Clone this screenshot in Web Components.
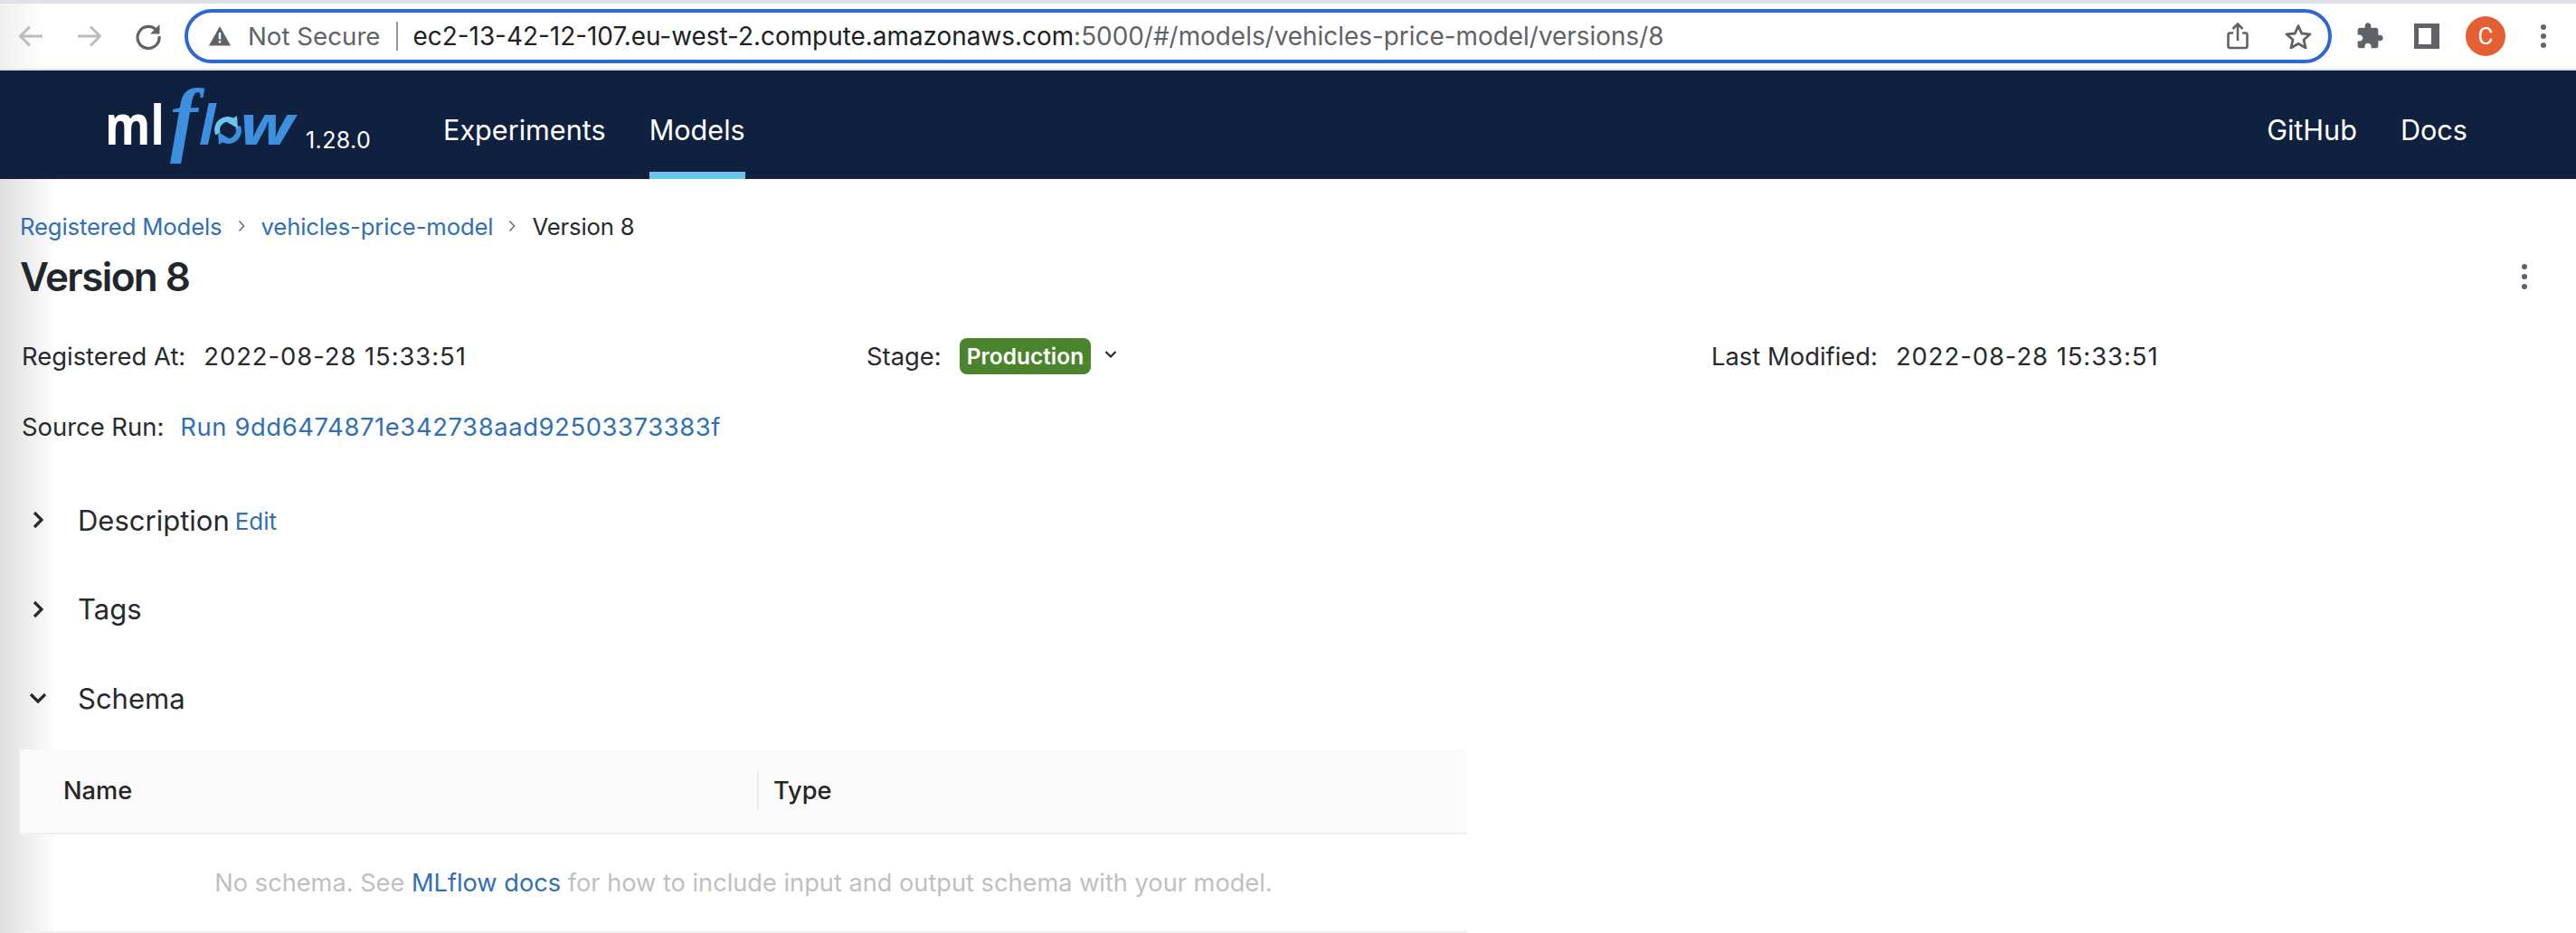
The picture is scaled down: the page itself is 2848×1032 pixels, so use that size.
<!DOCTYPE html>
<html>
<head>
<meta charset="utf-8">
<title>MLflow</title>
<style>
    html, body { margin: 0; padding: 0; background: #fff; }
    body { width: 2848px; height: 1032px; overflow: hidden; font-family: Inter, "Liberation Sans", sans-serif; color: #262a2e; }
</style>
</head>
<body>
<browser-bar url="ec2-13-42-12-107.eu-west-2.compute.amazonaws.com:5000/#/models/vehicles-price-model/versions/8"></browser-bar>
<ml-navbar version="1.28.0"></ml-navbar>
<version-page>
    <bread-crumbs></bread-crumbs>
    <page-title>Version 8</page-title>
    <meta-grid></meta-grid>
    <collapse-section label="Description" edit></collapse-section>
    <collapse-section label="Tags"></collapse-section>
    <collapse-section label="Schema" open></collapse-section>
    <schema-table></schema-table>
</version-page>

<script>
class BrowserBar extends HTMLElement {
    constructor() {
        super();
        this.attachShadow({ mode: 'open' });
    }

    connectedCallback() {
        const url = this.getAttribute('url');
        this.shadowRoot.innerHTML = `
            <style>
                :host { display: block; height: 78px; box-sizing: border-box; border-top: 4px solid #dee1e6; border-bottom: 2px solid #dee1e6; background: linear-gradient(90deg, #efefef, #fff 50px); }
                .bar { display: flex; align-items: center; height: 72px; padding-left: 20px; }
                svg { display: block; flex: none; }
                .pill { flex: none; width: 2374px; height: 60px; box-sizing: border-box; margin-left: 25px; border: 4px solid #3066d0; border-radius: 30px; display: flex; align-items: center; padding-left: 23px; background: #fff; font-family: Inter, "Liberation Sans", sans-serif; }
                .warn { font-size: 27.7px; color: #5f6368; margin-left: 19px; white-space: nowrap; }
                .sep { width: 2px; height: 32px; background: #9a9a9a; margin: 0 17px 0 17px; }
                .url { font-size: 27.9px; color: #202124; white-space: nowrap; flex: 1; }
                .url span { color: #5f6368; }
                .avatar { width: 44px; height: 44px; border-radius: 50%; background: #e36033; color: #fff; font: 26px Roboto, sans-serif; display: flex; align-items: center; justify-content: center; margin-left: 29px; flex: none; }
            </style>
            <div class="bar">
                <svg width="28" height="28" viewBox="0 0 28 28" fill="none" stroke="#bcbcbc" stroke-width="3"><path d="M27 14H3M13 3.5 2.5 14 13 24.5"/></svg>
                <svg style="margin-left:37px" width="28" height="28" viewBox="0 0 28 28" fill="none" stroke="#bcbcbc" stroke-width="3"><path d="M1 14h24M15 3.5 25.500 14 15 24.500"/></svg>
                <svg style="margin-left:36px" width="30" height="30" viewBox="0 0 30 30" fill="none"><path d="M24.500 9A12 12 0 1 0 27 15" stroke="#5f6368" stroke-width="3.200"/><path d="M27.500 2v10.500H17z" fill="#5f6368"/></svg>
                <div class="pill">
                    <svg width="24" height="22" viewBox="0 0 24 22"><path d="M12 0 24 21.500H0z" fill="#5f6368"/><path d="M10.800 7h2.400v7.500h-2.400zM10.800 16h2.400v2.500h-2.400z" fill="#fff"/></svg>
                    <div class="warn">Not Secure</div>
                    <div class="sep"></div>
                    <div class="url">${url.slice(0, 48)}<span>${url.slice(48)}</span></div>
                    <svg width="24" height="30" viewBox="0 0 24 30" fill="none" stroke="#5f6368" stroke-width="2.600" style="margin-right:40px"><path d="M7 11.500H3.500a2 2 0 0 0-2 2V26a2 2 0 0 0 2 2h17a2 2 0 0 0 2-2V13.500a2 2 0 0 0-2-2H17M12 20V2M6.500 7 12 1.500 17.500 7"/></svg>
                    <svg width="30" height="28" viewBox="0 0 30 28" fill="none" stroke="#5f6368" stroke-width="2.800" stroke-linejoin="round" style="margin-right:18px"><path d="M15 2.500 18.700 11 28 11.800 21 18 23.100 27 15 22.200 6.900 27 9 18 2 11.800 11.300 11z"/></svg>
                </div>
                <svg style="margin-left:26px" width="32" height="32" viewBox="0 0 24 24" fill="#5f6368"><path d="M20.500 11H19V7c0-1.100-.9-2-2-2h-4V3.500C13 2.120 11.880 1 10.500 1S8 2.120 8 3.500V5H4c-1.100 0-1.990.9-1.990 2v3.800H3.500c1.490 0 2.700 1.210 2.700 2.700s-1.210 2.700-2.700 2.700H2V20c0 1.100.9 2 2 2h3.800v-1.500c0-1.490 1.210-2.700 2.700-2.700 1.490 0 2.700 1.210 2.700 2.700V22H17c1.100 0 2-.9 2-2v-4h1.500c1.380 0 2.500-1.120 2.500-2.500S21.880 11 20.500 11z"/></svg>
                <svg style="margin-left:33px" width="28" height="28" viewBox="0 0 28 28"><path d="M0 0h28v28H0z" fill="#5f6368"/><path d="M5 5h14v18H5z" fill="#fff"/></svg>
                <div class="avatar">C</div>
                <svg style="margin-left:38px" width="8" height="28" viewBox="0 0 8 28" fill="#5f6368"><circle cx="4" cy="4" r="3"/><circle cx="4" cy="14" r="3"/><circle cx="4" cy="24" r="3"/></svg>
            </div>
        `;
    }
}

class MlNavbar extends HTMLElement {
    constructor() {
        super();
        this.attachShadow({ mode: 'open' });
    }

    connectedCallback() {
        this.shadowRoot.innerHTML = `
            <style>
                :host { display: flex; height: 120px; background: #10213f; color: #fff; font-family: Inter, "Liberation Sans", sans-serif; }
                .logo { display: block; flex: none; margin-left: 110px; width: 240px; height: 120px; }
                .version { font-size: 25px; letter-spacing: 0.4px; width: 152px; flex: none; align-self: flex-start; margin-top: 62px; margin-left: -12px; }
                a { font-size: 30.6px; color: #fff; text-decoration: none; display: block; box-sizing: border-box; height: 120px; padding-top: 47px; flex: none; }
                .exp { margin-right: 48px; }
                .active { border-bottom: 8px solid #6cc5ea; }
                .grow { flex: 1; }
                .docs { margin-left: 48px; margin-right: 120px; }
            </style>
            <svg class="logo" viewBox="0 0 240 120">
                <text x="6" y="82" font-family="'Open Sans', sans-serif" font-weight="700" font-size="60" fill="#fff" textLength="66" lengthAdjust="spacingAndGlyphs">ml</text>
                <text x="78" y="84" font-family="'Liberation Serif', serif" font-style="italic" font-weight="700" font-size="92" fill="#3c90dd">f</text>
                <text x="110" y="82" font-family="'Open Sans', sans-serif" font-style="italic" font-weight="700" font-size="60" fill="#3c90dd">l</text>
                <g fill="none" stroke-width="6">
                    <path d="M131 70A11.500 11.500 0 0 1 148 56" stroke="#6cc5ea"/>
                    <path d="M153 62A11.500 11.500 0 0 1 136 76" stroke="#3c90dd"/>
                </g>
                <path d="M152 50 153 64 141 57z" fill="#6cc5ea"/>
                <path d="M132 82 131 68 143 75z" fill="#3c90dd"/>
                <text x="155" y="82" font-family="'Open Sans', sans-serif" font-style="italic" font-weight="700" font-size="60" fill="#3c90dd" textLength="60" lengthAdjust="spacingAndGlyphs">w</text>
            </svg>
            <div class="version">${this.getAttribute('version')}</div>
            <a class="exp">Experiments</a>
            <a class="active">Models</a>
            <div class="grow"></div>
            <a>GitHub</a>
            <a class="docs">Docs</a>
        `;
    }
}

class VersionPage extends HTMLElement {
    constructor() {
        super();
        this.attachShadow({ mode: 'open' });
        this.shadowRoot.innerHTML = `
            <style>
                :host { display: block; height: 834px; box-sizing: border-box; padding: 34px 0 0 22px; background: linear-gradient(90deg, #dedede, #fff 64px); }
            </style>
            <slot></slot>
        `;
    }
}

class BreadCrumbs extends HTMLElement {
    constructor() {
        super();
        this.attachShadow({ mode: 'open' });
        this.shadowRoot.innerHTML = `
            <style>
                :host { display: flex; align-items: center; height: 36px; font-size: 25.7px; letter-spacing: -0.15px; color: #262a2e; }
                a { color: #2f6fb5; }
                svg { margin: 0 18px 0 17px; }
            </style>
            <a>Registered Models</a>
            <svg width="8" height="14" viewBox="0 0 8 14" fill="none" stroke="#707070" stroke-width="1.600"><path d="M1.500 1.500 6.500 7l-5 5.500"/></svg>
            <a>vehicles-price-model</a>
            <svg width="8" height="14" viewBox="0 0 8 14" fill="none" stroke="#707070" stroke-width="1.600"><path d="M1.500 1.500 6.500 7l-5 5.500"/></svg>
            <span>Version 8</span>
        `;
    }
}

class PageTitle extends HTMLElement {
    constructor() {
        super();
        this.attachShadow({ mode: 'open' });
        this.shadowRoot.innerHTML = `
            <style>
                :host { display: flex; align-items: center; justify-content: space-between; height: 56px; margin-top: 10px; padding-right: 53px; font-size: 44px; font-weight: 600; color: #1f272d; letter-spacing: -1.6px; }
            </style>
            <span><slot></slot></span>
            <svg width="8" height="28" viewBox="0 0 8 28" fill="#5a6168"><circle cx="4" cy="3" r="3"/><circle cx="4" cy="14" r="3"/><circle cx="4" cy="25" r="3"/></svg>
        `;
    }
}

class MetaGrid extends HTMLElement {
    constructor() {
        super();
        this.attachShadow({ mode: 'open' });
        this.shadowRoot.innerHTML = `
            <style>
                :host { display: grid; grid-template-columns: 934px 934px 1fr; grid-template-rows: 78px 74px; margin-top: 40px; padding-left: 2px; font-size: 27.4px; color: #262a2e; }
                .item { display: flex; align-items: flex-start; height: 40px; line-height: 40px; white-space: nowrap; }
                b { font-weight: 400; margin-right: 20px; }
                .run { margin-right: 18px; }
                .date { letter-spacing: 0.95px; }
                a { color: #2f6fb5; letter-spacing: 0.6px; }
                .badge { background: #4b842c; color: #fff; font-size: 24.5px; font-weight: 600; height: 40px; line-height: 40px; padding: 0 8px; border-radius: 8px; }
                svg { margin: 13px 0 0 15px; }
            </style>
            <div class="item"><b>Registered At:</b><span class="date">2022-08-28 15:33:51</span></div>
            <div class="item"><b>Stage:</b><span class="badge">Production</span>
                <svg width="14" height="10" viewBox="0 0 14 10" fill="none" stroke="#262a2e" stroke-width="2.200"><path d="M1.500 2 7 7.500 12.500 2"/></svg>
            </div>
            <div class="item"><b>Last Modified:</b><span class="date">2022-08-28 15:33:51</span></div>
            <div class="item"><b class="run">Source Run:</b><a>Run 9dd6474871e342738aad92503373383f</a></div>
        `;
    }
}

class CollapseSection extends HTMLElement {
    constructor() {
        super();
        this.attachShadow({ mode: 'open' });
    }

    connectedCallback() {
        const open = this.hasAttribute('open');
        const chevron = open
            ? '<svg width="20" height="12" viewBox="0 0 20 12" fill="none" stroke="#262a2e" stroke-width="3.200"><path d="M2 2l8 8 8-8"/></svg>'
            : '<svg width="12" height="20" viewBox="0 0 12 20" fill="none" stroke="#262a2e" stroke-width="3.200"><path d="M2 2l8 8-8 8"/></svg>';
        const edit = this.hasAttribute('edit') ? '<a>Edit</a>' : '';
        this.shadowRoot.innerHTML = `
            <style>
                :host { display: flex; align-items: center; height: 98.5px; font-size: 31px; color: #262a2e; }
                .ico { width: 64px; display: flex; justify-content: center; box-sizing: border-box; padding-right: 24px; flex: none; }
                a { color: #2f6fb5; font-size: 26px; margin-left: 6px; margin-top: 3px; }
            </style>
            <div class="ico">${chevron}</div>
            <span>${this.getAttribute('label')}</span>
            ${edit}
        `;
    }
}

class SchemaTable extends HTMLElement {
    constructor() {
        super();
        this.attachShadow({ mode: 'open' });
        this.shadowRoot.innerHTML = `
            <style>
                :host { display: block; width: 1600px; margin-top: 7px; font-size: 27.2px; }
                .head { display: flex; align-items: center; height: 92px; background: #fafafa; border-bottom: 2px solid #f0f0f0; font-weight: 500; color: #262626; }
                .name { width: 815px; box-sizing: border-box; padding-left: 48px; }
                .div { width: 2px; height: 45px; background: #ececec; }
                .type { padding-left: 16px; }
                .empty { display: flex; justify-content: center; align-items: center; height: 107px; border-bottom: 2px solid #f0f0f0; color: #bfbfbf; }
                .empty a { color: #2f6fb5; }
                .empty span { white-space: pre; }
            </style>
            <div class="head">
                <div class="name">Name</div>
                <div class="div"></div>
                <div class="type">Type</div>
            </div>
            <div class="empty"><span>No schema. See <a>MLflow docs</a> for how to include input and output schema with your model.</span></div>
        `;
    }
}

customElements.define('browser-bar', BrowserBar);
customElements.define('ml-navbar', MlNavbar);
customElements.define('version-page', VersionPage);
customElements.define('bread-crumbs', BreadCrumbs);
customElements.define('page-title', PageTitle);
customElements.define('meta-grid', MetaGrid);
customElements.define('collapse-section', CollapseSection);
customElements.define('schema-table', SchemaTable);
</script>
</body>
</html>
